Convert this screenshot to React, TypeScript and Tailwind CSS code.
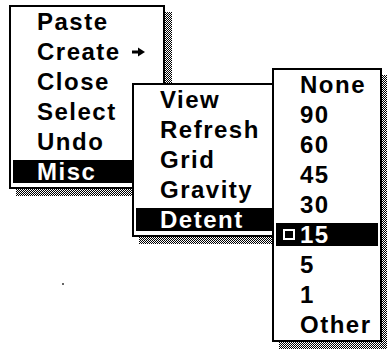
import React from "react";

type Item = { label: string; arrow?: boolean };

const dither =
  "bg-[image:repeating-conic-gradient(#000_0%_25%,#fff_0%_50%)] bg-[length:2px_2px]";

function Arrow() {
  return (
    <svg width="13" height="10" viewBox="0 0 13 10" className="ml-[11px] shrink-0">
      <rect x="0" y="3.5" width="7" height="3" fill="currentColor" />
      <polygon points="6,0.5 13,5 6,9.5" fill="currentColor" />
    </svg>
  );
}

function Row({ item, selected, checked }: { item: Item; selected?: boolean; checked?: boolean }) {
  return (
    <div className="h-[30px] px-[2px] pt-[3px] pb-[4px]">
      <div
        className={
          "h-full flex items-center pl-[7px] leading-[23px] " +
          (selected ? "bg-black text-white" : "bg-white text-black")
        }
      >
        <span className="w-[12px] h-[11px] shrink-0 flex items-center">
          {checked ? <span className="block w-[12px] h-[11px] border-2 border-white" /> : null}
        </span>
        <span className="ml-[5px] whitespace-nowrap">{item.label}</span>
        {item.arrow ? <Arrow /> : null}
      </div>
    </div>
  );
}

function Menu({
  pos,
  items,
  selected,
  checked,
}: {
  pos: string;
  items: Item[];
  selected: number;
  checked?: number;
}) {
  return (
    <div className={"absolute " + pos}>
      <div className={"absolute inset-0 translate-x-[7px] translate-y-[7px] " + dither} />
      <div className="relative border-2 border-black bg-white">
        {items.map((it, i) => (
          <Row key={it.label} item={it} selected={i === selected} checked={i === checked} />
        ))}
      </div>
    </div>
  );
}

export default function App() {
  const m1: Item[] = [
    { label: "Paste" },
    { label: "Create", arrow: true },
    { label: "Close" },
    { label: "Select" },
    { label: "Undo" },
    { label: "Misc" },
  ];
  const m2: Item[] = [
    { label: "View" },
    { label: "Refresh" },
    { label: "Grid" },
    { label: "Gravity" },
    { label: "Detent" },
  ];
  const m3: Item[] = ["None", "90", "60", "45", "30", "15", "5", "1", "Other"].map((l) => ({
    label: l,
  }));
  return (
    <div className="relative w-[387px] h-[354px] bg-white overflow-hidden font-['Liberation_Sans',Arial,sans-serif] font-bold text-[24px] tracking-[1.5px]">
      <Menu pos="left-[9px] top-[5px] w-[156px]" items={m1} selected={5} />
      <Menu pos="left-[132px] top-[83px] w-[152px]" items={m2} selected={4} />
      <Menu pos="left-[272px] top-[68px] w-[110px]" items={m3} selected={5} checked={5} />
      <div className="absolute left-[62px] top-[283px] w-[2px] h-[2px] bg-black/60" />
    </div>
  );
}
